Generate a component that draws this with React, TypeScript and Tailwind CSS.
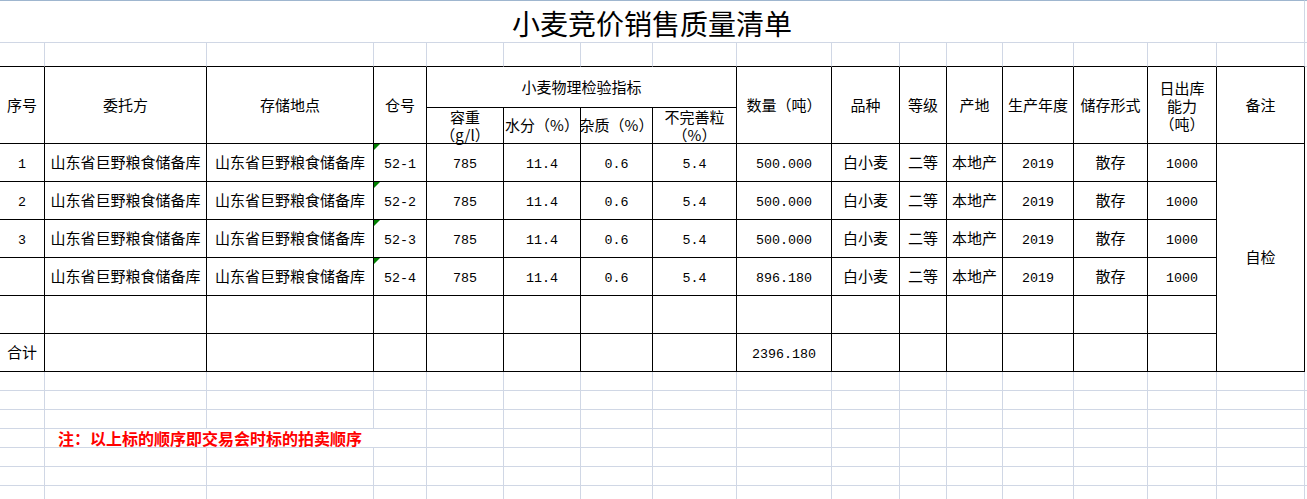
import React from "react";

const COLS =
  "grid grid-cols-[45px_162px_167px_53px_77px_77px_72px_84px_95px_68px_47px_56px_71px_74px_69px_88px_1fr]";
const TCOLS =
  "grid grid-cols-[45px_162px_167px_53px_77px_77px_72px_84px_95px_68px_47px_56px_71px_74px_69px_88px]";

const GL = "border-[#d0d7e5]";
const CJK = "font-['Noto_Sans_CJK_SC',sans-serif] [text-spacing-trim:space-all]";
const MONO = "font-['Liberation_Mono','Noto_Sans_CJK_SC',monospace] text-[13.33px] pt-[4px]";

function GridRow({ h, bottomBlack = false }: { h: string; bottomBlack?: boolean }) {
  const cells = Array.from({ length: 16 });
  return (
    <div className={`${COLS} ${h}`}>
      {cells.map((_, i) => (
        <div
          key={i}
          className={`border-r border-b ${GL} ${bottomBlack ? "border-b-black" : ""}`}
        />
      ))}
      <div className={`border-b ${GL}`} />
    </div>
  );
}

function NoteRow() {
  return (
    <div className={`${COLS} h-[19px]`}>
      <div className={`border-r border-b ${GL}`} />
      <div
        className={`col-span-3 border-r border-b ${GL} flex items-center pl-[13px] text-[16px] leading-none font-bold text-[#ff0000] whitespace-nowrap ${CJK}`}
      >
        注：以上标的顺序即交易会时标的拍卖顺序
      </div>
      {Array.from({ length: 12 }).map((_, i) => (
        <div key={i} className={`border-r border-b ${GL}`} />
      ))}
      <div className={`border-b ${GL}`} />
    </div>
  );
}

const cell =
  "border-r border-b border-black flex items-center justify-center text-center text-black";

function Txt({ children, mono = false }: { children?: React.ReactNode; mono?: boolean }) {
  return (
    <div className={`${cell} ${mono ? MONO : `${CJK} text-[15px]`}`}>{children}</div>
  );
}

function Cang({ v }: { v: string }) {
  return (
    <div className={`${cell} ${MONO} relative`}>
      <div className="absolute top-0 left-0 w-0 h-0 border-t-[6px] border-r-[6px] border-t-[#008000] border-r-transparent" />
      {v}
    </div>
  );
}

const rows = [
  { no: "1", c: "52-1", q: "500.000" },
  { no: "2", c: "52-2", q: "500.000" },
  { no: "3", c: "52-3", q: "500.000" },
  { no: "", c: "52-4", q: "896.180" },
];

export default function App() {
  return (
    <div className={`w-[1307px] h-[499px] overflow-hidden bg-white text-black ${CJK}`}>
      {/* title */}
      <div className="flex h-[43px]">
        <div
          className={`w-[1305px] border-t border-t-[#9fb6cf] border-b border-r ${GL} flex items-center justify-center text-[28px] leading-none text-black pt-[2px]`}
        >
          小麦竞价销售质量清单
        </div>
        <div className={`flex-1 border-t border-t-[#9fb6cf] border-b ${GL}`} />
      </div>
      <GridRow h="h-[24px]" bottomBlack />

      {/* table */}
      <div
        className={`${TCOLS} grid-rows-[41px_36px_38px_38px_38px_38px_38px_38px] text-[15px]`}
      >
        <div className={`${cell} row-span-2`}>序号</div>
        <div className={`${cell} row-span-2`}>委托方</div>
        <div className={`${cell} row-span-2`}>存储地点</div>
        <div className={`${cell} row-span-2`}>仓号</div>
        <div className={`${cell} col-span-4`}>小麦物理检验指标</div>
        <div className={`${cell} row-span-2`}>数量（吨）</div>
        <div className={`${cell} row-span-2`}>品种</div>
        <div className={`${cell} row-span-2`}>等级</div>
        <div className={`${cell} row-span-2`}>产地</div>
        <div className={`${cell} row-span-2`}>生产年度</div>
        <div className={`${cell} row-span-2`}>储存形式</div>
        <div className={`${cell} row-span-2 flex-col pt-[2px]`}>
          <span className="block h-[18px] leading-[18px]">日出库</span>
          <span className="block h-[18px] leading-[18px]">能力</span>
          <span className="block h-[18px] leading-[18px]">（吨）</span>
        </div>
        <div className={`${cell} row-span-2`}>备注</div>

        <div className={`${cell} flex-col`}>
          <span className="block h-[18px] leading-[18px]">容重</span>
          <span className="block h-[18px] leading-[18px] whitespace-nowrap">（g/l）</span>
        </div>
        <div className={`${cell} whitespace-nowrap`}>水分（%）</div>
        <div className={`${cell} whitespace-nowrap`}>杂质（%）</div>
        <div className={`${cell} flex-col`}>
          <span className="block h-[18px] leading-[18px]">不完善粒</span>
          <span className="block h-[18px] leading-[18px]">（%）</span>
        </div>

        {rows.map((r, i) => (
          <React.Fragment key={i}>
            <Txt mono>{r.no}</Txt>
            <Txt>山东省巨野粮食储备库</Txt>
            <Txt>山东省巨野粮食储备库</Txt>
            <Cang v={r.c} />
            <Txt mono>785</Txt>
            <Txt mono>11.4</Txt>
            <Txt mono>0.6</Txt>
            <Txt mono>5.4</Txt>
            <Txt mono>{r.q}</Txt>
            <Txt>白小麦</Txt>
            <Txt>二等</Txt>
            <Txt>本地产</Txt>
            <Txt mono>2019</Txt>
            <Txt>散存</Txt>
            <Txt mono>1000</Txt>
            {i === 0 && <div className={`${cell} row-span-6`}>自检</div>}
          </React.Fragment>
        ))}

        {Array.from({ length: 15 }).map((_, i) => (
          <Txt key={`e${i}`} />
        ))}

        <Txt>合计</Txt>
        {Array.from({ length: 7 }).map((_, i) => (
          <Txt key={`s${i}`} />
        ))}
        <Txt mono>2396.180</Txt>
        {Array.from({ length: 6 }).map((_, i) => (
          <Txt key={`t${i}`} />
        ))}
      </div>

      <GridRow h="h-[19px]" />
      <GridRow h="h-[19px]" />
      <GridRow h="h-[19px]" />
      <NoteRow />
      <GridRow h="h-[19px]" />
      <GridRow h="h-[19px]" />
      <GridRow h="h-[19px]" />
    </div>
  );
}
